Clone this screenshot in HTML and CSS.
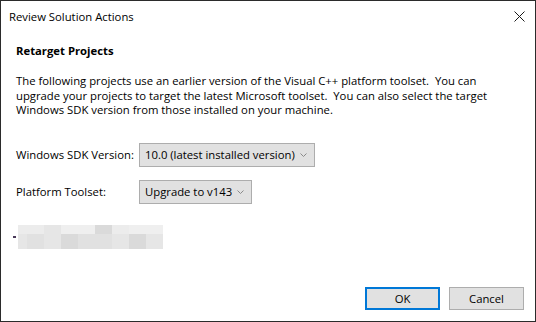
FILE: index.html
```html
<!DOCTYPE html>
<html lang="en">
  <head>
    <meta charset="UTF-8" />
    <title>Review Solution Actions</title>
    <link rel="stylesheet" href="styles.css">
  </head>
  <body>
    <div class="window">
      <div class="titlebar">
        <span class="title">Review Solution Actions</span>
        <svg class="close" width="11" height="11" viewBox="0 0 11 11">
          <path d="M0.5 0.5 L10.5 10.5 M10.5 0.5 L0.5 10.5" stroke="#1a1a1a" stroke-width="1" fill="none" />
        </svg>
      </div>

      <div class="content">
        <h2 class="heading">Retarget Projects</h2>
        <p class="msg">
          The following projects use an earlier version of the Visual C++ platform toolset.&nbsp; You can<br />
          upgrade your projects to target the latest Microsoft toolset.&nbsp; You can also select the target<br />
          Windows SDK version from those installed on your machine.
        </p>

        <div class="field">
          <span class="label">Windows SDK Version:</span>
          <div class="combo combo-sdk">
            <span>10.0 (latest installed version)</span>
            <svg class="chev" width="7" height="4" viewBox="0 0 7 4">
              <path d="M0.5 0.5 L3.5 3.5 L6.5 0.5" stroke="#8a8a8a" fill="none" />
            </svg>
          </div>
        </div>
        <div class="field">
          <span class="label">Platform Toolset:</span>
          <div class="combo combo-toolset">
            <span>Upgrade to v143</span>
            <svg class="chev" width="7" height="4" viewBox="0 0 7 4">
              <path d="M0.5 0.5 L3.5 3.5 L6.5 0.5" stroke="#8a8a8a" fill="none" />
            </svg>
          </div>
        </div>

        <div class="projects">
          <span class="dots"></span>
          <div class="redacted">
            <i class="t2"></i><i class="t2"></i><i class="t3"></i><i class="t1"></i><i class="t1"></i><i class="t5"></i><i class="t2"></i><i class="t1"></i><i class="t1"></i>
            <i class="t3"></i><i class="t4"></i><i class="t3"></i><i class="t5"></i><i class="t4"></i><i class="t4"></i><i class="t3"></i><i class="t5"></i><i class="t3"></i>
          </div>
        </div>
      </div>

      <div class="buttons">
        <button class="btn btn-ok">OK</button>
        <button class="btn">Cancel</button>
      </div>
    </div>
  </body>
</html>
```

FILE: styles.css
```css
body {
  margin: 0;
  background: #ffffff;
  font-family: "Open Sans", "Noto Sans", sans-serif;
  font-size: 11.3px;
  color: #000000;
}
.window {
  box-sizing: border-box;
  width: 536px;
  height: 322px;
  border: 1px solid #2b2b2b;
  display: flex;
  flex-direction: column;
  background: #ffffff;
}
.titlebar {
  height: 30px;
  display: flex;
  align-items: center;
  padding-left: 8px;
  padding-right: 10px;
}
.titlebar .title {
  flex: 1;
}
.content {
  flex: 1;
  padding: 0 15px;
}
.heading {
  font-size: 11.3px;
  font-weight: 700;
  line-height: 16px;
  margin: 12px 0 0 0;
}
.msg {
  line-height: 14.5px;
  margin: 15px 0 0 0;
  white-space: nowrap;
}
.field {
  display: flex;
  align-items: center;
  height: 24px;
  white-space: nowrap;
}
.field + .field {
  margin-top: 13px;
}
.msg + .field {
  margin-top: 25px;
}
.field .label {
  flex: 0 0 123px;
}
.combo {
  box-sizing: border-box;
  flex: none;
  height: 24px;
  display: flex;
  align-items: center;
  border: 1px solid #adadad;
  background: #e1e1e1;
  padding: 0 7px 0 5px;
}
.combo .chev {
  margin-left: auto;
}
.combo-sdk {
  width: 176px;
}
.combo-toolset {
  width: 113px;
}
.projects {
  display: flex;
  align-items: center;
  margin-top: 21px;
}
.dots {
  width: 3px;
  height: 2px;
  margin: 0 2px 0 -3px;
  background: #4a3a5a;
}
.redacted {
  display: grid;
  grid-template-columns: 9px repeat(8, 17px);
  grid-template-rows: 9px 15px;
}
.redacted i {
  display: block;
}
.redacted .t1 { background: #efefef; }
.redacted .t2 { background: #ececec; }
.redacted .t3 { background: #e6e6e6; }
.redacted .t4 { background: #e1e1e1; }
.redacted .t5 { background: #dadada; }
.buttons {
  display: flex;
  justify-content: flex-end;
  gap: 9px;
  padding: 0 11px 11px 0;
}
.btn {
  box-sizing: border-box;
  width: 75px;
  height: 23px;
  font-family: inherit;
  font-size: 11.3px;
  color: #000000;
  background: #e1e1e1;
  border: 1px solid #adadad;
  border-radius: 0;
  padding: 0;
}
.btn-ok {
  border: 2px solid #0078d7;
}
```
